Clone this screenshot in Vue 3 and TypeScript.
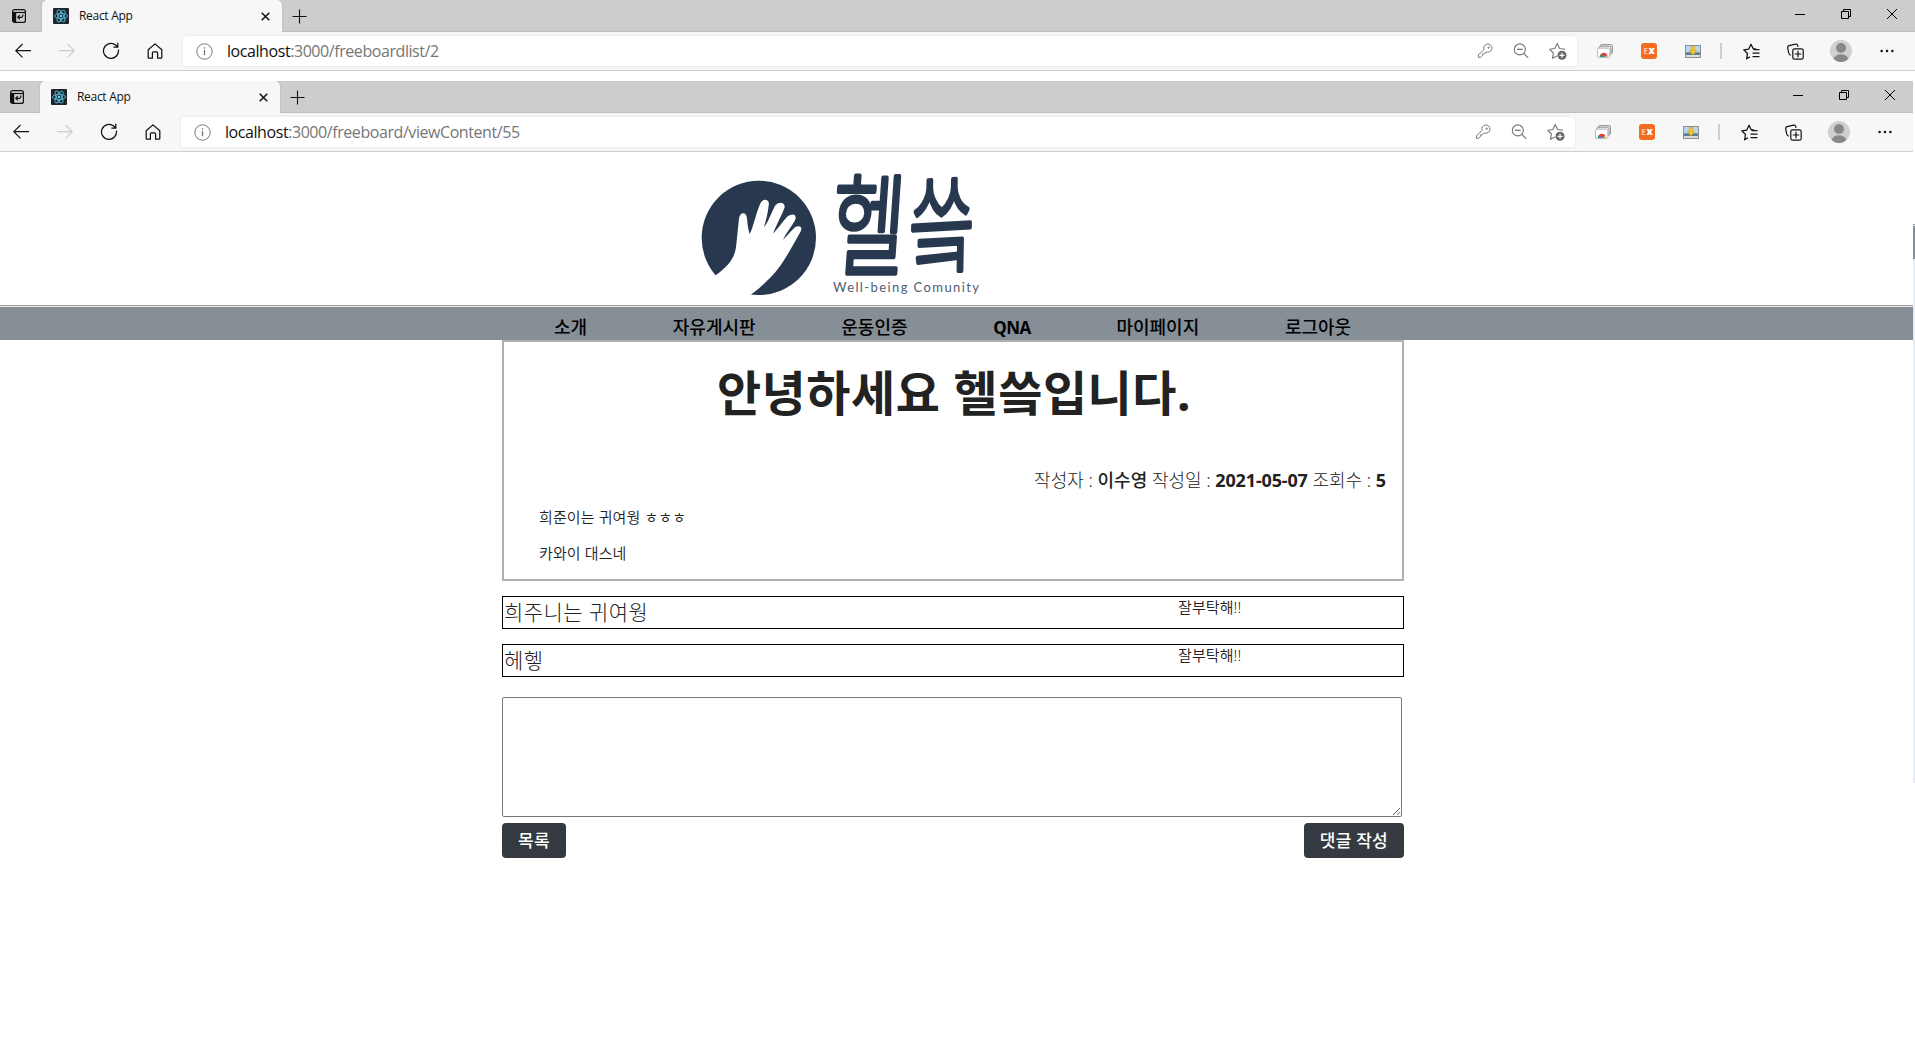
<script setup lang="ts">
interface BrowserWindow {
  id: number
  host: string
  path: string
  hasPage: boolean
}

interface Comment {
  text: string
  reply: string
}

const windows: BrowserWindow[] = [
  { id: 1, host: 'localhost', path: ':3000/freeboardlist/2', hasPage: false },
  { id: 2, host: 'localhost', path: ':3000/freeboard/viewContent/55', hasPage: true },
]

const menu: string[] = ['소개', '자유게시판', '운동인증', 'QNA', '마이페이지', '로그아웃']

const comments: Comment[] = [
  { text: '희주니는 귀여웡', reply: '잘부탁해!!' },
  { text: '헤헿', reply: '잘부탁해!!' },
]
</script>

<template>
  <div class="screen">
    <div v-for="w in windows" :key="w.id" class="window-row" :class="{ front: w.hasPage }">
      <section class="window">
        <div class="chrome">
          <div class="tabstrip">
            <svg class="tab-actions" width="14" height="14" viewBox="0 0 14 14" fill="none" stroke="#111">
              <rect x=".6" y=".6" width="12.8" height="12.8" rx="2" stroke-width="1.2" />
              <path d="M1 3.5h12.4" stroke-width="1.2" />
              <path d="M1 3.5h3.2v9.8H2.2L1 12z" fill="#111" stroke="none" />
              <path d="M10.8 5.5v1.3c0 1-.6 1.5-1.5 1.5H6M7.8 6.2 5.8 8.3l2 2.1" stroke-width="1.2" />
            </svg>
            <div class="tab">
              <svg class="favicon" width="16" height="16" viewBox="0 0 16 16">
                <rect width="16" height="16" rx="1" fill="#20232a" />
                <g fill="none" stroke="#53b9d6" stroke-width=".9">
                  <ellipse cx="8" cy="8" rx="6.6" ry="2.6" />
                  <ellipse cx="8" cy="8" rx="6.6" ry="2.6" transform="rotate(60 8 8)" />
                  <ellipse cx="8" cy="8" rx="6.6" ry="2.6" transform="rotate(120 8 8)" />
                </g>
                <circle cx="8" cy="8" r="1.3" fill="#61dafb" />
              </svg>
              <span class="tab-title">React App</span>
              <svg width="9" height="9" viewBox="0 0 9 9" stroke="#111" stroke-width="1.5"><path d="M.7.7l7.6 7.6M8.3.7.7 8.3" /></svg>
            </div>
            <svg class="new-tab" width="15" height="15" viewBox="0 0 15 15" stroke="#111" stroke-width="1.1"><path d="M7.5.5v14M.5 7.5h14" /></svg>
            <div class="window-buttons">
              <svg width="10" height="10" viewBox="0 0 10 10" stroke="#000"><path d="M0 5.5h10" /></svg>
              <svg width="10" height="10" viewBox="0 0 10 10" stroke="#000" fill="none"><path d="M.5 2.5h7v7h-7zM2.500 2.500v-2h7v7h-2" /></svg>
              <svg width="10" height="10" viewBox="0 0 10 10" stroke="#000"><path d="M0 0l10 10M10 0 0 10" /></svg>
            </div>
          </div>

          <div class="toolbar">
            <div class="nav-icons">
              <svg width="16" height="16" viewBox="0 0 16 16" fill="none" stroke="#111" stroke-width="1.2"><path d="M7.5 1 .8 7.7l6.7 6.7M.8 7.7H16" /></svg>
              <svg width="16" height="16" viewBox="0 0 16 16" fill="none" stroke="#ccc" stroke-width="1.2"><path d="M8.500 1l6.700 6.700-6.700 6.700M15.200 7.700H0" /></svg>
              <svg width="18" height="18" viewBox="0 0 18 18" fill="none" stroke="#111" stroke-width="1.25"><path d="M16.400 7.600A7.500 7.500 0 1 1 13.700 3L15.600 5M15.800.8V5.200H11.400" /></svg>
              <svg width="16" height="16" viewBox="0 0 16 16" fill="none" stroke="#111" stroke-width="1.25" stroke-linejoin="round"><path d="M1.200 6.800 8 .9l6.800 5.900v7.600q0 .8-.8.8h-3.400V9.800q0-1-1-1H6.400q-1 0-1 1v5.400H2q-.8 0-.8-.8z" /></svg>
            </div>
            <div class="address">
              <svg class="info" width="17" height="17" viewBox="0 0 17 17" fill="none" stroke="#767676"><circle cx="8.500" cy="8.500" r="7.700" /><path d="M8.500 7v5.300M8.500 4.300v1.500" stroke-width="1.300" /></svg>
              <span class="url"><b>{{ w.host }}</b>{{ w.path }}</span>
              <div class="address-icons">
                <svg width="16" height="16" viewBox="0 0 16 16" fill="none" stroke="#767676" stroke-linejoin="round"><path d="M7 6.400A4.100 4.100 0 1 1 9.900 9.100L8 9.700 7 11H5.600v1.400L3.600 14.300H1.400V12z" /><circle cx="11.700" cy="4.600" r=".7" /></svg>
                <svg width="16" height="16" viewBox="0 0 16 16" fill="none" stroke="#767676" stroke-width="1.100"><circle cx="6.800" cy="6.400" r="5.500" /><path d="M4 6.400h5.600M10.800 10.400l4.400 4.400" /></svg>
                <svg width="18" height="18" viewBox="0 0 18 18" fill="none" stroke="#767676" stroke-width="1.100" stroke-linejoin="round"><path d="M8 14 3.500 16.200 4.400 11 .8 7.300l5-.8L8.200 1.400l2.400 5.100 5.400.7" /><circle cx="13" cy="13.300" r="4.500" fill="#666" stroke="none" /><path d="M13 10.800v5M10.500 13.300h5" stroke="#fff" stroke-width="1.200" /></svg>
              </div>
            </div>
            <div class="extensions">
              <svg width="16" height="14" viewBox="0 0 16 14">
                <rect x="3.500" y=".5" width="12" height="9" rx="1.500" fill="#eee" stroke="#999" />
                <rect x="2" y="2.200" width="12" height="9" rx="1.500" fill="#eee" stroke="#8c8c8c" />
                <rect x=".5" y="4.200" width="12.300" height="9.300" rx="1.500" fill="#fff" stroke="#bbb" />
                <path d="M2.700 13a4.200 4.200 0 0 1 1.200-3L6.800 13z" fill="#26a65b" />
                <path d="M3.500 10.400a4.200 4.200 0 0 1 7.100.9L6.800 13z" fill="#e63b2e" />
                <path d="M10.500 10.900q.5 1 .4 2.100h-4z" fill="#fbc116" />
                <path d="M5 13a1.800 1.800 0 0 1 3.600 0z" fill="#3f84ef" />
              </svg>
              <svg width="16" height="16" viewBox="0 0 16 16">
                <rect width="16" height="16" rx="3" fill="#f26c22" />
                <text x="2.300" y="11" font-family="Open Sans, sans-serif" font-size="8" font-weight="700" fill="#ffc8a4">E</text>
                <text x="7.400" y="11" font-family="Open Sans, sans-serif" font-size="10" font-weight="800" fill="#fff">x</text>
              </svg>
              <svg width="16" height="13" viewBox="0 0 16 13">
                <rect x=".5" y=".5" width="15" height="12" fill="#b9d8ef" stroke="#8b8f94" />
                <path d="M1 7.300h14V10H1z" fill="#5f7f8e" /><path d="M1 10h14v2H1z" fill="#d8dde0" />
                <path d="M6.300 1.500h3.400v4h2.100L8 9.900 4.200 5.500h2.100z" fill="#f3c32c" stroke="#c99a1a" stroke-width=".5" />
              </svg>
            </div>
            <i class="divider"></i>
            <div class="profile-icons">
              <svg width="17" height="17" viewBox="0 0 17 17" fill="none" stroke="#111" stroke-width="1.250" stroke-linejoin="round"><path d="M7 13.700 3.600 15.800l.9-5.300L.8 6.800l5-.7L8 1.200l2.200 4.600H13M10.500 6.500H16.500M9.500 10H16.500M9.500 13.500h7" /></svg>
              <svg width="17" height="17" viewBox="0 0 17 17" fill="none" stroke="#111" stroke-width="1.200" stroke-linejoin="round"><path d="M4 12.300Q2 11.700 1.700 10L.7 4.800Q.5 3.100 2.100 2.700L8.600 1.200Q10.200.9 10.700 2.400L11.100 3.800" /><rect x="5.800" y="5.800" width="10.400" height="10.400" rx="1.800" fill="#f7f7f7" /><path d="M11 7.800v6.400M7.800 11h6.400" /></svg>
              <svg class="avatar" width="22" height="22" viewBox="0 0 22 22"><circle cx="11" cy="11" r="11" fill="#d2d0ce" /><circle cx="11" cy="8" r="5" fill="#8a8886" /><path d="M3.500 18.500Q6 14.200 11 14.200t7.500 4.300Q15.500 22 11 22t-7.500-3.500z" fill="#8a8886" /></svg>
              <svg class="dots" width="14" height="4" viewBox="0 0 14 4" fill="#111"><circle cx="1.600" cy="2" r="1.250" /><circle cx="7" cy="2" r="1.250" /><circle cx="12.400" cy="2" r="1.250" /></svg>
            </div>
          </div>
        </div>

        <main v-if="w.hasPage" class="page">
          <header class="brand">
            <svg width="320" height="153" viewBox="0 6 960 459">
              <circle cx="236.500" cy="263.500" r="171.500" fill="#27384f" />
              <path d="M108 375C148 346 166 322 169 283L177 205Q181 189 190 190Q199 190 201 205Q203 235 209 252C220 232 229 185 242 158Q248 147 260 150Q269 154 266 166C264 190 258 210 252 232C264 217 273 190 285 167Q294 156 307 159Q318 165 312 177C302 202 287 230 279 251C293 238 308 214 323 199Q335 190 344 195Q350 202 344 213C334 231 317 250 309 269C322 257 335 240 346 231Q357 226 363 232Q366 239 361 246C330 300 304 355 258 395Q238 416 214 433L190 448L90 400Z" fill="#fff" />
              <g class="brand-name" fill="#27384f" stroke="#27384f" stroke-width="8" stroke-linejoin="round">
                <text transform="translate(448 350) skewX(-4) scale(1.260 1.750)" font-size="190">헬</text>
                <text transform="translate(684 347) rotate(-3) skewX(-4) scale(1.130 1.660)" font-size="190">씈</text>
              </g>
              <text class="tagline" x="459" y="427" font-size="39" textLength="438" fill="#4e5d70">Well-being Comunity</text>
            </svg>
          </header>

          <nav class="menu">
            <a v-for="item in menu" :key="item" :class="{ latin: item === 'QNA' }">{{ item }}</a>
          </nav>

          <div class="content">
            <article class="post">
              <h1>안녕하세요 헬씈입니다.</h1>
              <p class="meta">작성자 : <b class="author">이수영</b> 작성일 : <b>2021-05-07</b> 조회수 : <b>5</b></p>
              <div class="body">
                <p>희준이는 귀여웡 ㅎㅎㅎ</p>
                <p>카와이 대스네</p>
              </div>
            </article>
            <div v-for="c in comments" :key="c.text" class="comment">
              <span class="comment-text">{{ c.text }}</span>
              <span class="comment-reply">{{ c.reply }}</span>
            </div>
            <textarea class="editor"></textarea>
            <div class="actions">
              <button>목록</button>
              <button>댓글 작성</button>
            </div>
          </div>
        </main>
      </section>
      <div v-if="w.hasPage" class="back-edge">
        <i class="edge-rule"></i>
        <i class="edge-menu"></i>
        <i class="edge-track"></i>
      </div>
    </div>
  </div>
</template>

<style>
body {
  background: #fff;
  overflow: hidden;
}
</style>

<style scoped>
.screen {
  width: 1915px;
  height: 1038px;
  overflow: hidden;
  background: #fff;
  font-family: 'Noto Sans', 'Noto Sans CJK KR', sans-serif;
  color: #222;
}
.screen * {
  box-sizing: border-box;
}
svg {
  display: block;
  flex: none;
}
.window-row {
  display: flex;
  height: 81px;
}
.window-row.front {
  height: 957px;
}
.window {
  width: 1915px;
  overflow: hidden;
}
.front .window {
  width: 1913px;
}
.chrome {
  width: 1915px;
}
.front .chrome {
  margin-left: -2px;
}

/* Tab strip */
.tabstrip {
  display: flex;
  align-items: center;
  height: 32px;
  background: #cdcdcd;
  box-shadow: inset 0 -1px #bfbfbf;
}
.tab-actions {
  margin: 0 16px 0 12px;
}
.tab {
  display: flex;
  align-items: center;
  width: 240px;
  height: 32px;
  padding: 0 12px 0 11px;
  border-radius: 5px 5px 0 0;
  background: #f7f7f7;
  box-shadow: 0 0 2px #aaa;
  clip-path: inset(0 -3px 0 -3px);
}
.tab-title {
  flex: 1;
  margin-left: 10px;
  font: 12px/16px 'Open Sans', 'Noto Sans', sans-serif;
  letter-spacing: -0.3px;
  color: #111;
}
.new-tab {
  margin-left: 10px;
}
.window-buttons {
  display: flex;
  gap: 36px;
  margin: -4px 18px 0 auto;
}

/* Toolbar */
.toolbar {
  display: flex;
  align-items: center;
  height: 39px;
  background: #f7f7f7;
  border-bottom: 1px solid #cfcfcf;
}
.nav-icons {
  display: flex;
  align-items: center;
  width: 182px;
  padding-left: 1px;
}
.nav-icons svg {
  margin: 0 14px;
}
.nav-icons svg:nth-child(3) {
  margin: 0 13px;
}
.address {
  display: flex;
  align-items: center;
  width: 1394px;
  height: 30px;
  margin-left: 1px;
  padding: 0 2px 0 13px;
  border-radius: 4px;
  background: #fff;
  box-shadow: 0 0 3px #e2e2e2;
}
.url {
  margin-left: 14px;
  font: 16px/22px 'Open Sans', 'Noto Sans', sans-serif;
  letter-spacing: -0.43px;
  color: #767676;
}
.url b {
  font-weight: 400;
  color: #111;
}
.address-icons {
  display: flex;
  align-items: center;
  gap: 20px;
  margin-left: auto;
  padding-right: 9px;
}
.address-icons svg:first-child,
.address-icons svg:nth-child(2) {
  margin-left: -1px;
  margin-right: 1px;
}
.address-icons svg:last-child {
  margin: 0 -1px;
}
.extensions {
  display: flex;
  align-items: center;
  gap: 28px;
  margin-left: 20px;
}
.divider {
  width: 2px;
  height: 16px;
  margin-left: 19px;
  background: #cfcfcf;
}
.profile-icons {
  display: flex;
  align-items: center;
  margin-left: 21px;
}
.profile-icons svg:nth-child(2) {
  margin-left: 27px;
}
.profile-icons .avatar {
  margin-left: 26px;
}
.profile-icons .dots {
  margin-left: 28px;
}

/* Site header */
.brand {
  height: 153px;
  padding-left: 680px;
}
.brand svg {
  overflow: visible;
}
.brand-name {
  font-family: 'Noto Sans CJK KR', sans-serif;
  font-weight: 300;
}
.tagline {
  font-family: Lato, sans-serif;
}
.menu {
  display: flex;
  gap: 85.7px;
  height: 35px;
  padding: 8px 0 0 554px;
  border-top: 1px solid #999;
  background: linear-gradient(#eee 1px, #868e96 1px);
  font-size: 18px;
  font-weight: 500;
  line-height: 26px;
  color: #000;
}
.menu .latin {
  width: 37.5px;
  font-family: 'Open Sans', sans-serif;
  font-weight: 700;
  font-size: 17px;
  letter-spacing: -0.6px;
  line-height: 27px;
}

/* Post */
.content {
  width: 902px;
  margin-left: 502px;
}
.post {
  height: 241px;
  border: 2px solid #b0b0b0;
}
h1 {
  margin: 19px 0 0;
  padding-left: 2px;
  font-size: 48px;
  font-weight: 700;
  line-height: 64px;
  letter-spacing: 0.55px;
  text-align: center;
}
.meta {
  margin: 43px 16px 0 0;
  font-size: 18px;
  font-weight: 300;
  line-height: 24px;
  text-align: right;
}
.meta b {
  font-weight: 700;
  letter-spacing: -0.15px;
}
.meta .author {
  font-weight: 500;
  letter-spacing: 0;
}
.body {
  margin: 15px 0 0 35px;
  font-size: 15px;
  font-weight: 350;
  line-height: 20px;
  letter-spacing: 0.12px;
}
.body p {
  margin: 0 0 16px;
}
.comment {
  display: flex;
  height: 33px;
  margin-top: 15px;
  padding-left: 1px;
  border: 1px solid #000;
}
.comment-text {
  width: 674px;
  font-size: 21px;
  font-weight: 300;
  line-height: 31px;
  letter-spacing: 0.45px;
}
.comment-reply {
  font-size: 15px;
  font-weight: 350;
  line-height: 21px;
  letter-spacing: 0.1px;
}
.editor {
  display: block;
  width: 900px;
  height: 120px;
  margin-top: 20px;
  border: 1px solid #767676;
  border-radius: 2px;
  resize: both;
}
.actions {
  display: flex;
  justify-content: space-between;
  margin-top: 6px;
}
.actions button {
  height: 35px;
  padding: 0 16px;
  border: 0;
  border-radius: 4px;
  background: #343a40;
  color: #fff;
  font: 500 17px/35px 'Noto Sans', 'Noto Sans CJK KR', sans-serif;
  letter-spacing: 0.25px;
}

/* Edge of the window behind */
.back-edge {
  display: flex;
  flex-direction: column;
  width: 2px;
  padding-top: 143px;
}
.edge-rule {
  height: 2px;
  background: linear-gradient(#999 1px, #eee 1px);
}
.edge-menu {
  height: 33px;
  background: #868e96;
}
.edge-track {
  height: 524px;
  background: #e6ecf1;
}
</style>
